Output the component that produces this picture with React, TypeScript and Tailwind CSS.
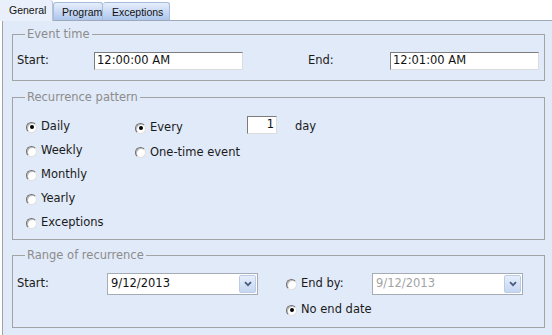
import React from "react";

const Radio = ({ checked, label, className = "" }: { checked?: boolean; label: string; className?: string }) => (
  <div className={`flex items-center ${className}`}>
    <span className="flex items-center justify-center w-[11px] h-[11px] rounded-full border border-t-[#6e6e6e] border-l-[#6e6e6e] border-r-[#e0e0e0] border-b-[#e0e0e0] bg-white shadow-[inset_1px_1px_0_#bdbdbd]">
      {checked && <span className="block w-[4px] h-[4px] rounded-full bg-black" />}
    </span>
    <span className="ml-[4px] text-[#1a1a1a]">{label}</span>
  </div>
);

const TextBox = ({ value, className = "", right }: { value: string; className?: string; right?: boolean }) => (
  <div
    className={`h-[18px] bg-white border border-t-[#7c7c7c] border-l-[#7c7c7c] border-r-[#dcdcdc] border-b-[#dcdcdc] flex items-center px-[2px] leading-none text-[#111] ${right ? "justify-end" : ""} ${className}`}
  >
    {value}
  </div>
);

const DropDown = ({ value, disabled, className = "" }: { value: string; disabled?: boolean; className?: string }) => (
  <div className={`h-[22px] bg-white border border-[#a5acb5] flex items-stretch ${className}`}>
    <div className={`flex-1 pl-[3px] pt-[2px] leading-[14px] ${disabled ? "text-[#a3a3a3]" : "text-[#111]"}`}>{value}</div>
    <div className="w-[17px] my-px mr-px rounded-[2px] border border-[#bccbe6] bg-gradient-to-b from-[#e6eefb] to-[#c6d6f1] flex items-center justify-center">
      <svg width="8" height="6" viewBox="0 0 8 6">
        <path d="M1 1.2 L4 4.2 L7 1.2" fill="none" stroke="#4a5d80" strokeWidth="1.8" />
      </svg>
    </div>
  </div>
);

const Group = ({ title, className = "", children }: { title: string; className?: string; children: React.ReactNode }) => (
  <fieldset className={`w-[533px] border border-[#a3a3a3] px-[4px] ${className}`}>
    <legend className="ml-[8px] px-[2px] leading-[14px] text-[#8c8c8c]">{title}</legend>
    {children}
  </fieldset>
);

export default function App() {
  return (
    <div className="w-[552px] h-[335px] overflow-hidden bg-white font-['DejaVu_Sans',sans-serif] text-[11.5px]">
      {/* tab strip */}
      <div className="flex items-end h-[21px] border-b border-[#9ea9ba] font-['Liberation_Sans',sans-serif] text-[10.5px]">
        <div className="relative z-10 -mb-px w-[53px] h-[21px] pl-[9px] pt-[3px] bg-[#e9f0fb] border-r border-[#b7c4d8] rounded-tr-[3px] text-[#111]">
          General
        </div>
        <div className="w-[50px] h-[18px] pl-[8px] pt-[2px] rounded-t-[3px] border border-b-0 border-[#a6bad9] bg-gradient-to-b from-[#e6eefb] to-[#adc6ec] text-[#111]">
          Program
        </div>
        <div className="w-[67px] h-[18px] pl-[9px] pt-[2px] rounded-t-[3px] border border-b-0 border-l-0 border-[#a6bad9] bg-gradient-to-b from-[#e6eefb] to-[#adc6ec] text-[#111]">
          Exceptions
        </div>
      </div>

      {/* tab panel */}
      <div className="ml-[2px] h-[314px] border-l border-[#a3a3a3] bg-[#e1eaf8] pl-[9px] pt-[6px]">
        <Group title="Event time" className="pt-[11px] pb-[11px]">
          <div className="flex items-center h-[17px] text-[#1a1a1a]">
            <span className="w-[77px]">Start:</span>
            <TextBox value="12:00:00 AM" className="w-[149px]" />
            <span className="ml-[65px] w-[82px]">End:</span>
            <TextBox value="12:01:00 AM" className="w-[149px]" />
          </div>
        </Group>

        <Group title="Recurrence pattern" className="mt-[9px] pt-[11px] pb-[4px]">
          <div className="flex">
            <div className="w-[118px] pl-[9px]">
              {["Daily", "Weekly", "Monthly", "Yearly", "Exceptions"].map((l, i) => (
                <Radio key={l} label={l} checked={i === 0} className="h-[24px]" />
              ))}
            </div>
            <div className="w-[112px] pt-[1px]">
              <Radio label="Every" checked className="h-[24px]" />
              <Radio label="One-time event" className="h-[25px]" />
            </div>
            <div className="flex items-center h-[24px]">
              <TextBox value="1" right className="w-[30px] -mt-[4px]" />
              <span className="ml-[18px] text-[#1a1a1a]">day</span>
            </div>
          </div>
        </Group>

        <Group title="Range of recurrence" className="mt-[8px] pt-[11px] pb-[6px]">
          <div className="flex items-start text-[#1a1a1a]">
            <span className="w-[90px] h-[22px] flex items-center">Start:</span>
            <DropDown value="9/12/2013" className="w-[151px]" />
            <div className="ml-[28px]">
              <div className="flex items-center">
                <Radio label="End by:" className="w-[86px] h-[22px]" />
                <DropDown value="9/12/2013" disabled className="w-[151px]" />
              </div>
              <Radio label="No end date" checked className="mt-[4px] h-[22px]" />
            </div>
          </div>
        </Group>
      </div>
    </div>
  );
}
